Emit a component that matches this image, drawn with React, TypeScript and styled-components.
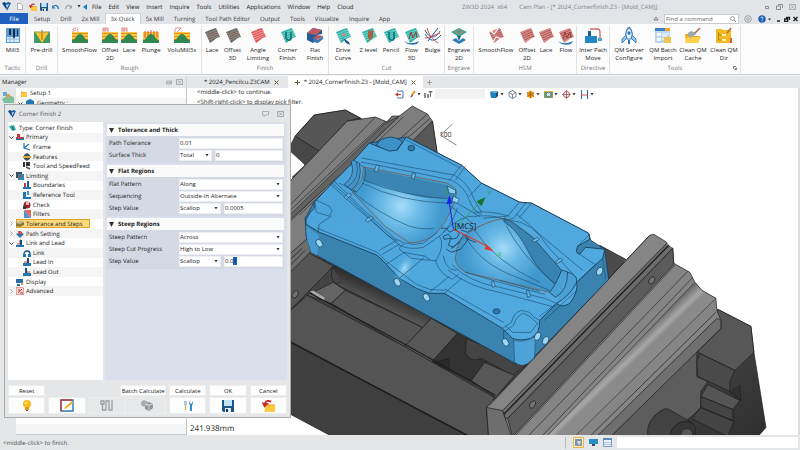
import React, { useEffect, useRef } from "react";
import styled, { createGlobalStyle, css } from "styled-components";

const GlobalStyle = createGlobalStyle`
  * { box-sizing: border-box; }
  body {
    margin: 0;
    background: #e4e6e8;
    color: #1c1c1c;
    font: 6px/8px "Open Sans", "Noto Sans", sans-serif;
    text-rendering: geometricPrecision;
  }
  button, input, select { font: inherit; color: inherit; margin: 0; border-radius: 0; }
  a { color: inherit; text-decoration: none; }
  svg { display: block; flex: none; }
`;

const Window = styled.div`
  min-height: 100vh;
  display: flex;
  flex-direction: column;
  overflow: hidden;
  white-space: nowrap;
`;

/* ---------- title bar ---------- */

const TitleBar = styled.header`
  display: flex;
  align-items: center;
  height: 13px;
  background: #e2e4e7;
`;

const QuickAccess = styled.div`
  display: flex;
  align-items: center;
  gap: 2px;
  width: 92px;
  padding-left: 2px;
`;

const IconButton = styled.button<{ $w?: number }>`
  display: flex;
  align-items: center;
  justify-content: center;
  padding: 0;
  border: 0;
  background: none;
  flex: none;
  width: ${(p) => p.$w ?? 9}px;
`;

const MenuBar = styled.nav`
  display: flex;
  gap: 7px;
  width: 370px;
`;

const WindowTitle = styled.div`
  flex: 1;
  display: flex;
  gap: 12px;
  color: #808387;
`;

const Controls = styled.div`
  display: flex;
  align-items: center;
  gap: 4px;
  padding-right: 3px;
`;

/* ---------- ribbon ---------- */

const TabBar = styled.nav`
  display: flex;
  align-items: stretch;
  height: 11px;
  background: #e2e4e7;
  color: #3a3a3a;
`;

const RibbonTab = styled.a<{ $kind?: "file" | "active" }>`
  display: flex;
  align-items: center;
  padding: 0 5px;
  ${(p) =>
    p.$kind === "file" &&
    css`
      width: 28px;
      justify-content: center;
      background: #1f5fbd;
      color: #fff;
      margin-right: 1px;
    `}
  ${(p) =>
    p.$kind === "active" &&
    css`
      background: #fcfcfc;
      border: 1px solid #cfd1d4;
      border-bottom: 0;
    `}
`;

const TabTools = styled.div`
  display: flex;
  align-items: center;
  gap: 5px;
  margin-left: auto;
  padding-right: 2px;
`;

const SearchBox = styled.label`
  display: flex;
  align-items: center;
  width: 75px;
  height: 10px;
  padding: 0 2px 0 1px;
  background: #fff;
  border: 1px solid #c9cbce;
`;

const BareInput = styled.input`
  flex: 1;
  min-width: 0;
  height: 100%;
  padding: 0;
  border: 0;
  outline: 0;
  background: none;
  &::placeholder { color: #666; opacity: 1; }
`;

const Ribbon = styled.div`
  display: flex;
  height: 51px;
  background: #fcfcfc;
  border-bottom: 1px solid #c9cbce;
`;

const Group = styled.section`
  display: flex;
  flex-direction: column;
  justify-content: space-between;
  position: relative;
  margin-top: 2px;
  padding-bottom: 2px;
  border-right: 1px solid #e2e3e5;
`;

const GroupTools = styled.div`
  display: flex;
  padding-top: 1px;
`;

const GroupName = styled.div`
  text-align: center;
  color: #76797c;
`;

const Launcher = styled.span`
  position: absolute;
  right: 3px;
  bottom: 4px;
`;

const Tool = styled.button<{ $w: number }>`
  display: flex;
  flex-direction: column;
  align-items: center;
  width: ${(p) => p.$w}px;
  padding: 0;
  border: 0;
  background: none;
  line-height: 8px;
  white-space: pre;
  text-align: center;
`;

const ToolIcon = styled.span`
  height: 18px;
  margin-bottom: 1px;
`;

/* ---------- document bar ---------- */

const DocBar = styled.div`
  display: grid;
  grid-template-columns: 187px 1fr;
  height: 13px;
  background: #e4e6e8;
  border-top: 1px solid #f4f5f6;
`;

const ManagerTitle = styled.div`
  display: flex;
  align-items: center;
  gap: 4px;
  padding: 0 3px 0 2px;
  border-right: 1px solid #d2d4d6;
`;

const Grow = styled.span`
  flex: 1;
`;

const DocTabs = styled.div`
  display: flex;
  align-items: stretch;
  gap: 2px;
  color: #1c1c1c;
`;

const DocTab = styled.div<{ $active?: boolean }>`
  display: flex;
  align-items: center;
  gap: 4px;
  padding: 0 7px 0 17px;
  ${(p) =>
    p.$active &&
    css`
      background: #fff;
      padding: 0 7px;
    `}
`;

/* ---------- work area ---------- */

const WorkArea = styled.main`
  flex: 1;
  display: grid;
  grid-template-columns: 187px 1fr;
  position: relative;
  min-height: 347px;
`;

const ManagerPane = styled.aside`
  display: flex;
  border-right: 1px solid #c4c6c9;
`;

const SideStrip = styled.div`
  width: 16px;
  padding: 3px 0 0 2px;
`;

const ManagerTree = styled.div`
  flex: 1;
  display: flex;
  flex-direction: column;
  background: #fff;
  border-bottom: 1px solid #c9cbce;
`;

const ManagerRow = styled.div<{ $shade?: boolean; $indent: number }>`
  display: flex;
  align-items: center;
  gap: 3px;
  height: 10px;
  padding-left: ${(p) => p.$indent}px;
  background: ${(p) => (p.$shade ? "#f5f5f5" : "#fff")};
`;

const Viewport = styled.section`
  position: relative;
  background: #fff;
  overflow: hidden;
  border-right: 2px solid #dcdee0;
`;

const Scene = styled.svg`
  position: absolute;
  inset: 0;
  width: 100%;
  height: 100%;
`;

const ViewHints = styled.div`
  position: absolute;
  top: -1px;
  left: 10px;
  color: #1c1c1c;
  line-height: 10px;
`;

const ViewTools = styled.div`
  position: absolute;
  top: 1px;
  left: 207px;
  display: flex;
  align-items: center;
  height: 10px;
`;

const FilterBox = styled.select`
  appearance: none;
  width: 50px;
  height: 10px;
  border: 0;
  background: #f2f2f2;
  margin: 0 3px 0 2px;
`;

const ViewScale = styled.div`
  position: absolute;
  left: 3px;
  bottom: 0;
  color: #1c1c1c;
  font-size: 8px;
  line-height: 12px;
`;

/* ---------- dialog ---------- */

const Dialog = styled.form`
  position: absolute;
  left: 4px;
  top: 16px;
  width: 287px;
  height: 314px;
  padding: 0 3px;
  display: flex;
  flex-direction: column;
  background: #e4e6e8;
  border: 1px solid #a9abae;
`;

const DialogTitle = styled.div`
  display: flex;
  align-items: center;
  gap: 3px;
  height: 17px;
  padding: 0 3px 0 0;
  color: #54575b;
`;

const DialogControls = styled.div`
  display: flex;
  gap: 8px;
  margin-left: auto;
`;

const DialogBody = styled.div`
  display: grid;
  grid-template-columns: 95px 1fr;
  gap: 2px;
  height: 258px;
`;

const PageTree = styled.ul`
  margin: 0;
  padding: 1px 0 84px;
  list-style: none;
  display: grid;
  grid-template-rows: repeat(18, 1fr);
  background: #fff;
`;

const PageNode = styled.li<{ $level: number; $shade: boolean }>`
  display: flex;
  align-items: center;
  padding-left: ${(p) => [1, 0, 15][p.$level]}px;
  background: ${(p) => (p.$shade ? "#f5f5f5" : "#fff")};
`;

const Expander = styled.span`
  width: 7px;
  margin: 0 0 0 1px;
`;

const NodeLabel = styled.span<{ $current?: boolean }>`
  display: flex;
  align-items: center;
  gap: 2px;
  min-height: 9px;
  ${(p) =>
    p.$current &&
    css`
      width: 74px;
      background: #fcd97a;
      box-shadow: 0 0 0 1px #e0a42a inset;
    `}
`;

const FormPane = styled.div`
  display: flex;
  flex-direction: column;
  gap: 2px;
  padding: 2px 3px 0 2px;
  background: #dadfeb;
`;

const Section = styled.fieldset`
  margin: 0;
  padding: 0 0 2px;
  border: 0;
  min-width: 0;
  background: #d5d9e4;
`;

const SectionHead = styled.h2`
  display: flex;
  align-items: center;
  gap: 4px;
  height: 12px;
  margin: 0 0 1px;
  padding-left: 2px;
  background: #fbfbfb;
  font-size: 6px;
  font-weight: 700;
`;

const Row = styled.div`
  display: grid;
  grid-template-columns: 70px 1fr;
  align-items: center;
  height: 12px;
  padding: 0 1px 0 2px;
`;

const Values = styled.div<{ $cols?: string }>`
  display: grid;
  grid-template-columns: ${(p) => p.$cols ?? "1fr"};
  gap: 3px;
`;

const fieldBox = css`
  width: 100%;
  height: 11px;
  padding: 0;
  border: 1px solid #eceef3;
  outline: 0;
  background: #fff;
`;

const Field = styled.input`
  ${fieldBox}
  &::selection { background: #1565c0; color: #0b2440; }
`;

const SelectWrap = styled.span`
  display: grid;
  align-items: center;
  > * { grid-area: 1 / 1; }
  > svg { justify-self: end; margin-right: 3px; pointer-events: none; }
`;

const SelectBox = styled.select`
  ${fieldBox}
  appearance: none;
`;

const Footer = styled.div`
  display: grid;
  grid-template-columns: repeat(7, minmax(0, 1fr));
  grid-template-rows: 11px 17px;
  gap: 1px 3px;
  margin-top: 5px;
`;

const PushButton = styled.button<{ $col?: number; $off?: boolean; $wide?: boolean }>`
  display: flex;
  align-items: center;
  justify-content: center;
  padding: 0;
  border: 1px solid #eceded;
  background: ${(p) => (p.$off ? "#e6e8ea" : "#fdfdfd")};
  grid-column: ${(p) => p.$col ?? "auto"};
  ${(p) =>
    p.$wide &&
    css`
      justify-self: end;
      width: 46px;
    `}
`;

/* ---------- status bar ---------- */

const StatusBar = styled.footer`
  display: flex;
  align-items: center;
  gap: 5px;
  height: 15px;
  padding: 0 2px 0 3px;
  background: #e4e6e8;
  color: #505356;
`;

const StatusDivider = styled.i`
  width: 1px;
  height: 12px;
  background: #b9c0b4;
  margin-right: 2px;
`;

const StatusInput = styled.input`
  width: 181px;
  height: 11px;
  border: 0;
  background: #fff;
`;

/* ---------- small icons ---------- */

const Caret = ({ c = "#333" }: { c?: string }) => (
  <svg width="4" height="3" viewBox="0 0 4 3"><path d="M.500 0h3L2 2.500z" fill={c} /></svg>
);

const Logo = ({ s = 9 }: { s?: number }) => (
  <svg width={s} height={s} viewBox="0 0 9 9">
    <path d="M0 1l3-1 2 3L4 7z" fill="#123f73" />
    <path d="M3 2l3-2 3 1-4 8z" fill="#1a5da4" />
    <path d="M4 3l3-1-2 4z" fill="#bfe0f7" />
  </svg>
);

const Folder = ({ s = 8, arrow = true }: { s?: number; arrow?: boolean }) => (
  <svg width={s} height={s} viewBox="0 0 12 12">
    <path d="M3 4h3l1 1h5v6.500h-9z" fill="#f0a21c" />
    <path d="M2 11.500L4 6h8v5.500z" fill="#ffc83d" />
    {arrow && <path d="M8.500 2.500C6 1 3.500 1.500 3 4" fill="none" stroke="#c62828" strokeWidth="1.600" />}
    {arrow && <path d="M0 3l6 1-4 4z" fill="#c62828" />}
  </svg>
);

const Floppy = ({ s = 8 }: { s?: number }) => (
  <svg width={s} height={s} viewBox="0 0 12 12">
    <path d="M0 0h12v12H1.500L0 10.500z" fill="#1c5688" />
    <path d="M2 0h8v6H2z" fill="#bfe4f6" />
    <path d="M3 8h6v4H3z" fill="#e8eef3" />
    <path d="M4 9h2v3H4z" fill="#16395a" />
  </svg>
);

const Curve = ({ flip, c }: { flip?: boolean; c: string }) => (
  <svg width="7" height="6" viewBox="0 0 7 6">
    <g transform={flip ? "matrix(-1 0 0 1 7 0)" : undefined}>
      <path d="M1 3C3 .5 6 1 6.500 5" fill="none" stroke={c} strokeWidth="1.300" />
      <path d="M0 1v3.500h3.500z" fill={c} />
    </g>
  </svg>
);

const Cross = ({ c = "#6b5a3a" }: { c?: string }) => (
  <svg width="5" height="5" viewBox="0 0 5 5"><path d="M.5.5l4 4M4.500.5l-4 4" stroke={c} strokeWidth="1" /></svg>
);

const BoxedCross = () => (
  <svg width="7" height="6" viewBox="0 0 7 6" fill="none" stroke="#909396" strokeWidth=".7">
    <path d="M.5.5h6v5h-6zM2 1.500l3 3M5 1.500l-3 3" />
  </svg>
);

/* ---------- ribbon icons ---------- */

const Terrain = ({ kind }: { kind: string }) => (
  <svg width="18" height="18" viewBox="0 0 18 18">
    {kind !== "plunge" && kind !== "drill" && (
      <g stroke="#d9736c" strokeWidth=".8" fill="none">
        <path d={kind === "volu" ? "M2 1h6L3 6M2 6V2" : "M2 1h5v5H2zM2 3h5M4 1v5"} strokeDasharray={kind === "smooth" ? "1 1" : undefined} />
      </g>
    )}
    <path d="M1 5h16v11H1z" fill={kind === "drill" ? "#3f9a60" : "#fbcb3c"} />
    {kind === "drill" ? (
      <>
        <path d="M2 5h14l-7 11z" fill="#f7c52f" />
        <path d="M9 3v10" stroke="#c05a2a" strokeWidth="1" />
        <path d="M1 5h16" stroke="#8f9c52" />
      </>
    ) : (
      <>
        {kind === "plunge" ? (
          <path d="M3 4v7M6 4v6M9 3v5M12 4v6M15 4v7" stroke="#df4a32" strokeWidth="1" />
        ) : (
          <path d="M1 6.500h16M1 9.500h16M1 12.500h16" stroke="#e98a2d" strokeWidth="1" />
        )}
        <path d="M1 16v-3c4 0 4-6 8-6s4 6 8 6v3z" fill="#31884f" />
      </>
    )}
  </svg>
);

const Surface = ({ tone, kind }: { tone: "gray" | "red" | "teal" | "pink"; kind?: string }) => {
  const [a, b] = { gray: ["#63716c", "#d4867b"], red: ["#e25d5f", "#f7b1ad"], teal: ["#35b5aa", "#8edfd4"], pink: ["#d98a86", "#9a4645"] }[tone];
  return (
    <svg width="18" height="18" viewBox="0 0 18 18">
      <path d="M2 5C6 4 8 2 13 1l4 9c-5 1-6 4-10 6z" fill={a} />
      <path d="M3 7c4-1 6-3 11-4M4 9c4-1 6-3 11-4M5 11c4-1 6-3 10-4M6 13c4-1 5-3 10-4" stroke={b} strokeWidth=".7" fill="none" />
      {kind === "groove" && <path d="M7 5v6c1 3 5 3 5 0V5" fill="none" stroke="#14717c" strokeWidth="1.600" />}
      {kind === "level" && <path d="M8 4l5-1v7l-3 3-2-2z" fill="#a9603f" />}
      {kind === "drive" && <path d="M9 11l6 4 1 3-4-2z" fill="#1a4f90" />}
      {kind === "drive" && <path d="M8 6l4 1-3 3z" fill="#e2836f" />}
      {kind === "flow" && <path d="M1 14c4 3 9 3 15 0l-2 3c-4 1-8 1-11-1z" fill="#2372ac" />}
      {kind === "flow" && <path d="M6 12l2-7 2 6 3-6 1 6" fill="none" stroke="#963c3c" />}
      {kind === "sparse" && <path d="M3 3l4 4 4-5M6 15l3-5 6 2" stroke="#fcfcfc" strokeWidth="1.200" fill="none" />}
    </svg>
  );
};

const Picture = ({ name }: { name: string }) => (
  <svg width="18" height="18" viewBox="0 0 18 18">
    {name === "mill" && (
      <>
        <path d="M2 1h14v15H2z" fill="#5b9bd0" />
        <path d="M3 10h12v5H3z" fill="#dcecf7" />
        <path d="M5 2h2v6H5zM9 2h2v9H9zM13 2h1v7h-1z" fill="#162c48" />
        <path d="M3 12h12M6 10v5M10 10v5" stroke="#6aa6d8" strokeWidth=".7" />
      </>
    )}
    {name === "flat" && (
      <>
        <path d="M1 6l6-5 9 2v4l-5 1v4l-4 4-6-3z" fill="#285a98" />
        <path d="M1 6l6-5 9 2-6 5zM7 11l5-3 5 1-5 4z" fill="#bf5a60" />
        <path d="M7 11l5 2 5-4v3l-5 4-5-1z" fill="#347ab9" />
      </>
    )}
    {name === "bulge" && (
      <g fill="none">
        <path d="M1 3c4 9 11 9 15 1M1 7c5 8 10 8 16 1M4 14L14 1" stroke="#2a5a96" />
        <path d="M3 1c2 7 5 11 11 15M1 11c5 0 9-3 15-5" stroke="#c8484c" />
      </g>
    )}
    {name === "engrave" && (
      <>
        <path d="M1 5l8-4 8 4-8 5z" fill="#37a49a" />
        <path d="M5 5l4-2 4 2-4 2z" fill="none" stroke="#d88065" />
        <path d="M7 9h4l-2 5z" fill="#1c6a90" />
        <path d="M2 13l4-2 3 3 4-3 3 2-7 4z" fill="#2d7bb2" />
      </>
    )}
    {name === "path" && (
      <>
        <path d="M1 9h12v7H1z" fill="#2387c4" />
        <path d="M4 9V4h3v5z" fill="#1b5f93" />
        <path d="M6 2h8c2 0 2 2 2 4v6" fill="none" stroke="#cf6763" strokeWidth="1.300" />
        <path d="M14 11h4v3h-4z" fill="#4aa6d8" />
      </>
    )}
    {name === "rocket" && (
      <>
        <path d="M9 0c4 4 4 8 2 12H7C5 8 5 4 9 0z" fill="#eaf4fb" stroke="#2f78b7" strokeWidth="1.200" />
        <path d="M6 8l-4 4v4l4-4M12 8l4 4v4l-4-4" fill="#90c4ea" stroke="#2f78b7" strokeWidth=".9" />
        <circle cx="9" cy="6" r="1.700" fill="#2f78b7" />
        <path d="M8 13h2v4H8z" fill="#2f78b7" />
      </>
    )}
    {name === "batch" && (
      <>
        <path d="M1 1h15v15H1z" fill="#b9d7ef" />
        <path d="M1 1h15v3H1z" fill="#3c7fc0" />
        <path d="M3 6h4v3H3zM3 11h4v3H3z" fill="#fff" />
        <path d="M8 7h7M8 9h5M8 12h7" stroke="#fff" strokeWidth="1" />
        <path d="M11 1h5v3h-5z" fill="#f3a12d" />
        <path d="M10 10h7v6h-7z" fill="#f0c24e" />
      </>
    )}
    {name === "cleanCache" && (
      <>
        <path d="M1 7h6l1 2h8l-2 7H2z" fill="#eeaa1d" />
        <path d="M3 10h14l-3 6H1z" fill="#ffd04a" />
        <path d="M16 1l-6 6" stroke="#a36a4a" strokeWidth="1.600" />
        <path d="M4 6c3-3 6-2 8 1l-5 4c-2-1-3-2-3-5z" fill="#9fa7b0" />
      </>
    )}
    {name === "cleanDir" && (
      <>
        <path d="M1 2h6l1 1h8v13H1z" fill="#f6ba22" />
        <path d="M3.500 5v8h3M3.500 8h3" fill="none" stroke="#a37a1c" strokeWidth=".8" />
        <path d="M7 7h4v2H7zM7 12h4v2H7z" fill="#fff0b8" />
        <path d="M16 1l-4 5" stroke="#b06a38" strokeWidth="1.500" />
        <path d="M15 11h2v5h-2z" fill="#da5a36" />
      </>
    )}
  </svg>
);

type ToolDef = [label: string, width: number, icon: React.ReactNode];
const groups: { name: string; tools: ToolDef[]; launcher?: boolean }[] = [
  { name: "Tactic", tools: [["Mill3", 25, <Picture name="mill" />]] },
  { name: "Drill", tools: [["Pre-drill", 31, <Terrain kind="drill" />]] },
  {
    name: "Rough",
    tools: [
      ["SmoothFlow", 43, <Terrain kind="smooth" />],
      ["Offset\n2D", 18, <Terrain kind="offset" />],
      ["Lace", 20, <Terrain kind="lace" />],
      ["Plunge", 24, <Terrain kind="plunge" />],
      ["VoluMill3x", 38, <Terrain kind="volu" />],
    ],
  },
  {
    name: "Finish",
    tools: [
      ["Lace", 20, <Surface tone="gray" />],
      ["Offset\n3D", 21, <Surface tone="gray" />],
      ["Angle\nLimiting", 30, <Surface tone="red" />],
      ["Corner\nFinish", 29, <Surface tone="teal" kind="groove" />],
      ["Flat\nFinish", 26, <Picture name="flat" />],
    ],
  },
  {
    name: "Cut",
    tools: [
      ["Drive\nCurve", 28, <Surface tone="teal" kind="drive" />],
      ["Z level", 23, <Surface tone="teal" kind="level" />],
      ["Pencil", 22, <Surface tone="teal" kind="groove" />],
      ["Flow\n3D", 19, <Surface tone="teal" kind="flow" />],
      ["Bulge", 23, <Picture name="bulge" />],
    ],
  },
  { name: "Engrave", tools: [["Engrave\n2D", 28, <Picture name="engrave" />]] },
  {
    name: "HSM",
    tools: [
      ["SmoothFlow", 44, <Surface tone="pink" kind="sparse" />],
      ["Offset\n2D", 18, <Surface tone="pink" />],
      ["Lace", 20, <Surface tone="pink" />],
      ["Flow", 20, <Surface tone="pink" kind="flow" />],
    ],
  },
  { name: "Directive", tools: [["Inter Path\nMove", 32, <Picture name="path" />]] },
  {
    name: "Tools",
    launcher: true,
    tools: [
      ["QM Server\nConfigure", 38, <Picture name="rocket" />],
      ["QM Batch\nImport", 30, <Picture name="batch" />],
      ["Clean QM\nCache", 30, <Picture name="cleanCache" />],
      ["Clean QM\nDir", 32, <Picture name="cleanDir" />],
    ],
  },
];

/* ---------- option tree ---------- */

const NodeIcon = ({ name }: { name: string }) => (
  <svg width="8" height="8" viewBox="0 0 8 8">
    {name === "type" && <><path d="M0 2l5-1 2 5-4 1z" fill="#35a79c" /><path d="M3 3l2 3" stroke="#175f72" /></>}
    {name === "primary" && <><path d="M0 4h8v3H0z" fill="#1f6fae" /><path d="M1 1h3v3h3v2H1z" fill="#c83b36" /></>}
    {name === "frame" && <path d="M1 0v5l6 2M1 5l5-4" fill="none" stroke="#246fae" strokeWidth="1.200" />}
    {name === "features" && <><path d="M1 2l3-2 3 2v4L4 8 1 6z" fill="#37525f" /><path d="M0 3h8v2H0z" fill="#e3a92e" /></>}
    {name === "tool" && <><path d="M0 0h2v5H0zM3 0h4v4H3z" fill="#333" /><path d="M3 5l4 2" stroke="#555" strokeWidth="1.500" /></>}
    {name === "limiting" && <><path d="M0 0h6v6H0z" fill="#37525f" /><path d="M2 2h6v6H2z" fill="#2a8ab0" /><path d="M3 3h2v3H3z" fill="#b44" /></>}
    {name === "bounds" && <><path d="M0 6h8v2H0z" fill="#1f77b5" /><path d="M1 2h2v4H1z" fill="#c33" /><path d="M4 0h2v6H4z" fill="#1a5d93" /></>}
    {name === "ref" && <><path d="M0 1h3v5h5v2H0z" fill="#1f77b5" /><path d="M4 0h2v4H4z" fill="#3a97cf" /></>}
    {name === "check" && <><circle cx="4" cy="4" r="3.500" fill="#9c2430" /><path d="M3 1h3v3H3z" fill="#f0b7b7" /><path d="M0 5h3v3H0z" fill="#333" /></>}
    {name === "filters" && <><path d="M1 0h7v8z" fill="#e06a60" /><path d="M1 0v8h7z" fill="#5592ca" /></>}
    {name === "steps" && <><path d="M0 3l4-2 4 1v3L4 7 0 6z" fill="#8c7a3c" /><path d="M0 3l4-2 4 1-4 2z" fill="#c9bf9b" /></>}
    {name === "path" && <><path d="M0 4l4-2 4 2-4 4z" fill="#1f77b5" /><path d="M2 1h3l2 3-4 1z" fill="#c8504b" /></>}
    {name === "linklead" && <><path d="M0 6h8v2H0z" fill="#1f77b5" /><path d="M1 5h3V1h1v3" fill="none" stroke="#d33" /><path d="M4 1h2v5H4z" fill="#174f80" /></>}
    {name === "leadin" && <><path d="M0 5h8v3H0z" fill="#1f77b5" /><path d="M4 0h2v5H4z" fill="#174f80" /><path d="M1 4h3" stroke="#d33" /></>}
    {name === "leadout" && <><path d="M0 5h8v3H0z" fill="#1f77b5" /><path d="M2 0h2v5H2z" fill="#174f80" /><path d="M4 4h3" stroke="#d33" /></>}
    {name === "arch" && <><path d="M0 5h3v3H0zM5 5h3v3H5z" fill="#1f77b5" /><path d="M1 5c0-4 6-4 6 0" stroke="#174f80" strokeWidth="1.300" fill="none" /></>}
    {name === "display" && <><path d="M0 1h7v4H0z" fill="#2f6da8" /><path d="M1 6h3v2H1z" fill="#1f77b5" /><path d="M5 5h2v2H5z" fill="#e2a33a" /></>}
    {name === "advanced" && <><path d="M0 0h6l2 2v6H0z" fill="#f4d3d0" stroke="#c4544e" strokeWidth=".7" /><path d="M2 6l4-4M2 3h2M4 6h3" stroke="#b8423c" /></>}
  </svg>
);

type NodeDef = [label: string, level: 0 | 1 | 2, icon: string, open?: boolean];
const nodes: NodeDef[] = [
  ["Type: Corner Finish", 0, "type"],
  ["Primary", 1, "primary", true],
  ["Frame", 2, "frame"],
  ["Features", 2, "features"],
  ["Tool and SpeedFeed", 2, "tool"],
  ["Limiting", 1, "limiting", true],
  ["Boundaries", 2, "bounds"],
  ["Reference Tool", 2, "ref"],
  ["Check", 2, "check"],
  ["Filters", 2, "filters"],
  ["Tolerance and Steps", 1, "steps", false],
  ["Path Setting", 1, "path", false],
  ["Link and Lead", 1, "linklead", true],
  ["Link", 2, "arch"],
  ["Lead In", 2, "leadin"],
  ["Lead Out", 2, "leadout"],
  ["Display", 1, "display"],
  ["Advanced", 1, "advanced", false],
];

const Chevron = ({ open }: { open?: boolean }) =>
  open === undefined ? null : (
    <svg width="5" height="5" viewBox="0 0 5 5">
      <path d={open ? "M.5 1.500l2 2 2-2" : "M1.500.5l2 2-2 2"} fill="none" stroke={open ? "#333" : "#999"} strokeWidth=".9" />
    </svg>
  );

const Choice = ({ id, value }: { id: string; value: string }) => (
  <SelectWrap>
    <SelectBox id={id} aria-label={id} defaultValue={value}>
      <option>{value}</option>
    </SelectBox>
    <Caret />
  </SelectWrap>
);

const Head = ({ children }: { children: string }) => (
  <SectionHead>
    <svg width="5" height="5" viewBox="0 0 5 5"><path d="M0 0h5L2.500 5z" fill="#333" /></svg>
    {children}
  </SectionHead>
);

/* ---------- model view ---------- */

const ln = { fill: "none", stroke: "#1b4a6c", strokeWidth: 0.6 };
const Model = () => (
  <Scene viewBox="188 88 610 347" preserveAspectRatio="xMinYMin slice" role="img" aria-label="Mold core clamped in a vise">
    <defs>
      <linearGradient id="top" x1="0" y1="0" x2="1" y2="1">
        <stop offset="0" stopColor="#4ba3da" /><stop offset="1" stopColor="#52abe0" />
      </linearGradient>
      <radialGradient id="glow1" gradientUnits="userSpaceOnUse" cx="402" cy="206" r="40" gradientTransform="rotate(30 402 206)">
        <stop offset="0" stopColor="#a5dcf8" /><stop offset=".45" stopColor="#6dbce8" /><stop offset="1" stopColor="#429bd0" />
      </radialGradient>
      <radialGradient id="glow2" gradientUnits="userSpaceOnUse" cx="504" cy="248" r="42">
        <stop offset="0" stopColor="#a5dcf8" /><stop offset=".4" stopColor="#68b8e6" /><stop offset="1" stopColor="#3f97cc" />
      </radialGradient>
      <radialGradient id="glow3">
        <stop offset="0" stopColor="#a5dcf8" /><stop offset="1" stopColor="#4fa8dd" stopOpacity="0" />
      </radialGradient>
      <linearGradient id="cove" gradientUnits="userSpaceOnUse" x1="600" y1="350" x2="622" y2="373">
        <stop offset="0" stopColor="#595959" /><stop offset=".55" stopColor="#6b6b6b" /><stop offset=".85" stopColor="#a8a8a8" /><stop offset="1" stopColor="#8a8a8a" />
      </linearGradient>
      <linearGradient id="rail" gradientUnits="userSpaceOnUse" x1="385" y1="290" x2="378" y2="306">
        <stop offset="0" stopColor="#303030" /><stop offset="1" stopColor="#585858" />
      </linearGradient>
      <linearGradient id="side" x1="0" y1="0" x2="1" y2="1">
        <stop offset="0" stopColor="#565656" /><stop offset="1" stopColor="#2e2e2e" />
      </linearGradient>
    </defs>

    <g stroke="#1d1d1d" strokeWidth=".7" strokeLinejoin="round">
      {/* fixed jaw */}
      <path d="M291 146L296 136L315 115L346 110L361 118L380 130L306 180L293 177L306 165L303 162L291 151Z" fill="#484848" />
      <path d="M296 136L315 115L346 110L361 118L348 121L320 151Z" fill="#565656" />
      <path d="M288 184L348 121L376 117L388 122L393 116L400 116L413 106L428 114L433 121L438 156L340 250L288 290Z" fill="#7e7e7e" />
      <path d="M433 121L439 160L404 150Z" fill="#575757" />
      <path d="M288 208L376 117M288 213L386 121M288 221L393 116M288 224L399 117M300 215L404 117M330 203L428 114M333 203L430 119" fill="none" strokeWidth=".6" />
      <path d="M386 123L400 116L372 143L345 171L288 222V217Z" fill="#626262" strokeWidth=".5" />

      {/* base */}
      <path d="M288 272L308 252L500 340L530 365L494 400L400 360L288 316Z" fill="#434343" />
      <path d="M309 252L334 266L290 311L288 272Z" fill="#555" />
      <path d="M288 256L312 235L313 250L288 275Z" fill="#6d6d6d" />
      <path d="M306 250L288 268M303 248L288 262" fill="none" />
      <path d="M333 267L350 262L440 310L423 327L337 284Z" fill="url(#rail)" />
      <path d="M333 267L332 276Q336 288 342 281" fill="#454545" />
      <path d="M334 282L346 290L332 303L308 295Z" fill="#646464" />
      <path d="M346 290L423 327L406 347L332 303Z" fill="#555" />
      <path d="M310 291L314 290L326 297L325 301Z" fill="#aaa" strokeWidth=".4" />
      <path d="M432 318L458 333L432 362L405 346Z" fill="#575757" />
      <path d="M458 333L432 362L472 380L487 362L470 340Z" fill="#333" />
      <path d="M467 338L466 352Q470 363 482 358L513 375L527 364Z" fill="#444" />
      <path d="M485 362L515 375L496 397L472 380Z" fill="#575757" />
      <path d="M436 362L449 358L450 369Z" fill="#2a2a2a" />
      <path d="M288 313L308 295L407 347L495 397L487 407L490 436H468L288 339Z" fill="#545454" />
      <path d="M311 293L406 344L496 395" fill="none" strokeWidth="1.200" />
      <path d="M288 340L470 436H333L288 412Z" fill="#3f3f3f" />
      <path d="M288 340L470 436" strokeWidth="1.600" />
      <ellipse cx="296" cy="294" rx="2.500" ry="4" transform="rotate(30 296 294)" fill="#717171" />
      <path d="M600 245L626 259L610 280L592 300Z" fill="#4b4b4b" />

      {/* moving jaw support */}
      <path d="M718 309L751 326L754 352L766 427L758 436H610L690 340Z" fill="url(#side)" />
      <path d="M718 309L751 326L754 352L735 370L700 353L690 340Z" fill="#575757" />
      <path d="M721 328L697 352V376L708 381L701 391V407L694 414L650 450H590L600 420Z" fill="#5d5d5d" />
      <path d="M700 353L735 370L730 381V391L698 376L697 361Z" fill="#4a4a4a" />
      <path d="M708 384L740 400L733 409L701 396Z" fill="#555" />
      <path d="M701 396L733 409L733 420L701 407ZM701 407L734 421L728 436L692 418Z" fill="#444" />
      <path d="M740 384L741 400L729 391" fill="#2f2f2f" />
      <path d="M648 436Q646 420 660 411Q666 406 671 410L692 422V436Z" fill="#424242" />
      <ellipse cx="683" cy="433" rx="14" ry="11" fill="#353535" transform="rotate(-40 683 433)" />
      <circle cx="687" cy="434" r="6" fill="#555" />

      {/* moving jaw */}
      <path d="M650 235L654 234L667 242V246L673 248L674 263L690 272L695 282L702 290L716 298L717 310L721 320V328L697 350L611 436H489L487 407Z" fill="#858585" />
      <path d="M673 248L674 264L513 436L510 425L508 418Z" fill="#5c5c5c" />
      <path d="M667 243L503 410L505 417L508 418L673 248" fill="#6c6c6c" />
      <path d="M669 245L504 414" fill="none" strokeWidth="1.300" />
      <path d="M487 407L503 410L512 436H489Z" fill="#6e6e6e" />
      <path d="M650 235L490 405M675 265L515 436M688 271L528 436M693 277L542 436" fill="none" strokeWidth=".6" />
      <path d="M695 282L702 290L716 298L575 436H547Z" fill="url(#cove)" strokeWidth=".5" />
      <path d="M717 318L597 436L611 436L721 328V320Z" fill="#6f6f6f" />
      <path d="M716 312L590 436" fill="none" />
      <ellipse cx="652" cy="280" rx="2.500" ry="4" transform="rotate(30 652 280)" fill="#747474" />
      <ellipse cx="533" cy="404" rx="2.500" ry="4" transform="rotate(30 533 404)" fill="#747474" />
    </g>

    {/* mold core */}
    <g stroke="#143650" strokeWidth=".8" strokeLinejoin="round">
      <path d="M306 218L315 202L353 164L370 143L407 137L462 165L482 183L520 202L532 203L589 233L591 240L605 249L609 279L528 363Q522 366 514 362L312 252L307 236Z" fill="#3a83b0" />
      <path d="M377 145Q380 138 391 137Q400 138 403 142L397 151L389 152Z" fill="#3c91c7" />
      <path d="M315 202L333 183L352 164L354 161L370 143L390 151L398 150L407 137L462 165L482 183L520 202L532 203L589 233L590 239L578 246Q575 253 580 254L586 247L605 249L603 258L577 282Q579 292 570 303Q562 308 557 303L540 320Q541 333 531 338Q520 341 513 338L503 328L445 293L430 293L417 288L400 278L387 264L378 255L320 232L307 224Q305 218 315 208Z" fill="url(#top)" />
    </g>
    <path d="M307 226L320 235L318 255L312 252L308 240Z" fill="#469bd0" />
    <path d="M514 340Q524 344 536 336L535 356Q524 370 515 361Z" fill="#4da3d7" />
    <ellipse cx="405" cy="268" rx="17" ry="9" fill="url(#glow3)" transform="rotate(-60 405 268)" />

    <g strokeLinejoin="round" strokeLinecap="round">
      {/* left cavity */}
      <path d="M365 167L412 176L448 183Q458 188 457 193L455 202Q446 226 433 236Q420 244 409 242L387 227Q370 210 353 192L362 180Z" fill="url(#glow1)" stroke="#7c5a4c" strokeWidth=".8" />
      <path d="M366 168L412 177L448 185Q456 190 455 198Q430 200 410 194L363 180Z" fill="#3b85b4" />
      <path d="M365 180Q400 196 455 199M363 183Q400 202 450 203M354 192Q380 214 410 226Q425 230 434 228" {...ln} />
      <path d="M352 162L354 160L360 163Q364 180 352 190L345 184Q357 176 352 162Z" fill="#4597cb" stroke="#173e5b" strokeWidth=".7" />
      <path d="M360 164L366 168Q368 182 357 192L352 190M357 162Q362 178 348 187M340 183L350 188L357 192" {...ln} />
      <path d="M331 184Q354 205 384 231L400 245Q410 250 424 247L440 236Q452 226 458 208M335 181Q360 206 388 232Q404 248 424 243L438 232" {...ln} />
      <path d="M362 162L414 172L452 180Q465 186 470 200Q474 212 482 214M363 158L416 168L455 175Q470 184 474 198L482 212" {...ln} />
      <path d="M377 165l-2 6 3 1 2-6zM413 173l-1 5 3 1 1-5zM371 216l-5 4 2 2 6-4zM349 193l-4 4 2 2 5-4z" fill="#67b7e6" stroke="#173e5b" strokeWidth=".6" />

      {/* right cavity */}
      <path d="M457 252Q458 240 470 232Q486 221 505 218L513 222L533 237L562 270L560 284L550 292L500 280L466 272Q452 264 457 252Z" fill="url(#glow2)" stroke="#7c5a4c" strokeWidth=".8" />
      <path d="M505 218L513 222L533 237L562 270L557 285Q536 268 528 250Q518 230 505 222Z" fill="#3883b2" stroke="#173e5b" strokeWidth=".6" />
      <path d="M507 226Q522 256 556 284M466 236Q480 264 520 278L550 290M475 230Q496 262 540 282" {...ln} />
      <path d="M511 220Q534 222 548 246L577 278M517 214Q530 224 540 234L583 270M520 202L508 216L484 218M526 203L514 218L504 221M532 203L520 217" {...ln} />
      <path d="M453 265Q470 282 500 287L545 298L557 303M449 270Q470 287 500 292L552 306M500 280L540 291M466 272L500 282L545 294" {...ln} />
      <path d="M562 270Q556 285 550 292L556 297Q568 290 568 272ZM568 272Q578 274 577 282Q570 296 557 303" fill="#4a9fd3" stroke="#173e5b" strokeWidth=".8" />
      <path d="M533 240l5 -3 2 2-5 3zM556 261l5-3 2 2-5 3zM529 290l2 6-3 1-1-6zM494 281l2 5-3 1-1-5z" fill="#67b7e6" stroke="#173e5b" strokeWidth=".6" />

      {/* centre runners */}
      <path d="M440 236Q446 244 437 260Q432 262 426 256L404 252Q396 248 404 244M444 232Q462 214 476 216M436 260Q440 274 453 279L459 274M444 256Q446 270 457 270M404 252L412 258L430 260" {...ln} />
      <path d="M476 216Q496 214 506 220M474 212Q490 210 510 216M450 205L474 224M456 202L480 216M383 254L400 244M380 250L396 241M387 264L405 252M462 165L450 180M482 183L470 196M466 166L456 180M430 292L450 276M445 293L462 278M400 278L424 258" {...ln} />
      <path d="M442 228h5l3 4 6-3 4 4-3 5-6 1-2 6 5 2 6-6 4-6 5 2-3 6-5 6-9 3-5-3M444 236l5-2 3 4-7 1zM462 230l6 2 5-3M466 238l10 4M452 248l8-6" fill="none" stroke="#173e5b" strokeWidth=".8" />
      <path d="M448 186l8 4v4l-6-1zM454 196l6 3-2 4-5-2z" fill="#8bcdf1" stroke="#173e5b" strokeWidth=".6" />

      {/* corner pockets and front edges */}
      <path d="M316 202L317 212L330 216L333 211L330 206L317 200M319 232L320 224L332 216M333 183L350 198L388 235L398 241M318 228L378 252L388 262L417 284L430 289L445 290" {...ln} />
      <path d="M503 328L512 322Q514 312 522 310L530 312Q534 318 540 320M505 331L514 325Q517 315 524 313L530 316L538 323M504 338V330M514 338L515 361M536 334L535 358M506 325L513 332L531 332L538 323" {...ln} />
      <path d="M578 246L589 235M580 254L595 264M557 303L540 316M603 258L606 279M545 320L577 290M597 263L577 282" {...ln} />
      <path d="M446 289L504 322M407 140L461 168M378 255L387 264" {...ln} />
    </g>
    <g stroke="#173e5b" strokeWidth=".7" fill="#2f78a8">
      <ellipse cx="412" cy="148" rx="3.500" ry="2.800" />
      <ellipse cx="497" cy="311" rx="3.500" ry="2.600" />
    </g>
    <g stroke="#173e5b" strokeWidth=".7" fill="#9bd6f5">
      {[[320, 243], [398, 282], [427, 297], [506, 342], [538, 336], [546, 340], [600, 271]].map(([x, y]) => (
        <ellipse key={x} cx={x} cy={y} rx="2.800" ry="4.200" transform={`rotate(${x > 530 ? 25 : -35} ${x} ${y})`} />
      ))}
    </g>

    {/* coordinate frame */}
    <path d="M454 229L450 204" stroke="#1b22e0" strokeWidth="1" />
    <path d="M447 204L450 195L453 203Z" fill="#1b22e0" />
    <path d="M454 229L478 205" stroke="#2a9b45" strokeWidth=".8" />
    <path d="M477 201L486 197L482 206Z" fill="#17722c" />
    <path d="M454 229L488 246" stroke="#e03a2a" strokeWidth="1" />
    <path d="M487 244L494 251L485 249Z" fill="#e03a2a" />
    <g fontFamily="Open Sans, Noto Sans, sans-serif">
      <text x="498" y="257" fontSize="7" fill="#22c83c">X</text>
      <text x="488" y="195" fontSize="7" fill="#2f9e48">Y</text>
      <text x="446" y="194" fontSize="7" fill="#2f9e48">Z</text>
      <text x="455" y="229" fontSize="8" fill="#111">[MCS]</text>
      <text x="440" y="137" fontSize="7" fill="#4a1420">100</text>
    </g>
    <path d="M453 124L441 135L457 145" fill="none" stroke="#555" strokeWidth=".7" />
  </Scene>
);

const ViewIcon = ({ name }: { name: string }) => (
  <svg width="9" height="9" viewBox="0 0 9 9">
    {name === "exit" && <><path d="M2 1h6v7H2" fill="none" stroke="#3d7db4" /><path d="M6 4.500H1M3 3L1 4.500 3 6" fill="none" stroke="#c9342d" strokeWidth="1.100" /></>}
    {name === "brush" && <><path d="M7 1L4 5" stroke="#e3952b" strokeWidth="2" /><path d="M4 4l1 2-3 2z" fill="#8d4534" /></>}
    {name === "filter" && <><path d="M0 3h2v5H0zM3 4h2v4H3z" fill="#8b8e91" /><path d="M4 1h5L7 3v4H6V3z" fill="#6c6f72" /></>}
    {name === "solid" && <><path d="M0 2l3-1h5L6 3v5H1z" fill="#1f7fc0" /><path d="M6 3l2-2v5L6 8z" fill="#125583" /><path d="M0 2l3-1h5L6 3z" fill="#6bb8e6" /></>}
    {name === "wire" && <path d="M1 2.500l3.500-2 3.500 2v4L4.500 8.500 1 6.500zM1 2.500l3.500 2 3.500-2M4.500 4.500v4" fill="#fff" stroke="#5b6770" strokeWidth=".8" />}
    {name === "star" && <><path d="M1 2.500L4.500.5 8 2.500v4L4.500 8.500 1 6.500z" fill="#f1a124" /><path d="M1 2.500l7 4M8 2.500l-7 4M4.500 1v7" stroke="#a65b13" strokeWidth=".8" /></>}
    {name === "zoom" && <><path d="M0 1h9v7H0z" fill="#8aa04f" /><circle cx="4.500" cy="4.500" r="2.500" fill="#d7ebf7" stroke="#31688f" /><path d="M0 1h9v1H0z" fill="#e4ad38" /></>}
    {name === "target" && <><circle cx="4.500" cy="4.500" r="3" fill="none" stroke="#b8494a" /><path d="M4.500 0v9M0 4.500h9" stroke="#8d5257" strokeWidth=".8" /></>}
    {name === "ruler" && <><path d="M1.500 0v9M7.500 0v9" stroke="#2e6ea8" strokeWidth="1.100" /><path d="M1 5h7" stroke="#c9534d" /></>}
  </svg>
);

const FooterIcon = ({ name }: { name: string }) => (
  <svg width="14" height="13" viewBox="0 0 14 13">
    {name === "bulb" && <><circle cx="7" cy="5" r="4" fill="#fdb915" /><path d="M5 8h4v3H5z" fill="#e59712" /><path d="M6 11h2v1H6z" fill="#555" /><circle cx="6" cy="4" r="1.500" fill="#ffe07a" /></>}
    {name === "edit" && <><path d="M1 1h12v11H1z" fill="#fff" stroke="#2c78b7" strokeWidth="1.400" /><path d="M1 12V1h11" fill="none" stroke="#c93a34" strokeWidth="1.400" /><path d="M12 2L5 8l-1 2 2-.5L13 4z" fill="#f0ac28" /></>}
    {name === "pulse" && <path d="M1 2h3v3H1zM2.500 5v6H6V2h3v9h3V1" fill="none" stroke="#9b9da0" strokeWidth="1.300" />}
    {name === "block" && <><path d="M5 5l4-2 4 2v4l-4 3-4-2z" fill="#909295" /><path d="M1 3l3-2 4 2v4L4 8 1 6z" fill="#a9abad" /><path d="M5 5l4 1 4-1M9 6v5" stroke="#d7d8d9" fill="none" /></>}
    {name === "tools" && <><path d="M3 2h3v4L5 7H4L3 6z" fill="#b4c6d2" /><path d="M4 7h1v4H4z" fill="#d9a33c" /><path d="M8 4l1-2v2l1 1 1-1V2l1 2-1 3v5H9V7z" fill="#2f8fc7" /></>}
  </svg>
);

export default function App() {
  const stepRef = useRef<HTMLInputElement>(null);
  useEffect(() => {
    stepRef.current?.focus();
    stepRef.current?.setSelectionRange(3, 4);
  }, []);

  return (
    <Window>
      <GlobalStyle />
      <TitleBar>
        <QuickAccess>
          <Logo />
          <IconButton aria-label="New" $w={13}>
            <svg width="6" height="7"><path d="M.5.5h3l2 2v4h-5z" fill="#fff" stroke="#999" strokeWidth=".7" /></svg>
          </IconButton>
          <IconButton aria-label="Open"><Folder /></IconButton>
          <IconButton aria-label="Save"><Floppy /></IconButton>
          <IconButton aria-label="Undo" $w={11}><Curve c="#2c7fc0" /></IconButton>
          <IconButton aria-label="Redo" $w={11}><Curve flip c="#a2a6aa" /></IconButton>
          <IconButton aria-label="Customize" $w={5}><Caret /></IconButton>
          <IconButton aria-label="Collapse" $w={4}>
            <svg width="4" height="6"><path d="M4 0v6L0 3z" fill="#1e7fd0" /></svg>
          </IconButton>
        </QuickAccess>
        <MenuBar>
          {["File", "Edit", "View", "Insert", "Inquire", "Tools", "Utilities", "Applications", "Window", "Help", "Cloud"].map((m) => (
            <a href="#menu" key={m}>{m}</a>
          ))}
        </MenuBar>
        <WindowTitle>
          <span>ZW3D 2024&nbsp; x64</span>
          <span>Cam Plan - [* 2024_Cornerfinish.Z3 - [Mold_CAM]]</span>
        </WindowTitle>
        <Controls>
          <IconButton aria-label="Minimize"><svg width="4" height="4"><path d="M.5 1.500h3v2h-3z" fill="none" stroke="#777" strokeWidth=".8" /></svg></IconButton>
          <IconButton aria-label="Restore"><svg width="7" height="6"><path d="M2 .5h4.500v3.500M.5 2h4v3.500h-4z" fill="none" stroke="#777" strokeWidth=".8" /></svg></IconButton>
          <IconButton aria-label="Close"><BoxedCross /></IconButton>
        </Controls>
      </TitleBar>

      <TabBar>
        <RibbonTab href="#file" $kind="file">File</RibbonTab>
        {["Setup", "Drill", "2x Mill", "3x Quick", "5x Mill", "Turning", "Tool Path Editor", "Output", "Tools", "Visualize", "Inquire", "App"].map((t) => (
          <RibbonTab href="#tab" key={t} $kind={t === "3x Quick" ? "active" : undefined}>{t}</RibbonTab>
        ))}
        <TabTools>
          <svg width="6" height="5" viewBox="0 0 6 5"><path d="M1 4h4L3 1z" fill="none" stroke="#666" strokeWidth=".8" /></svg>
          <SearchBox>
            <BareInput aria-label="Find a command" placeholder="Find a command" />
            <svg width="6" height="6" viewBox="0 0 6 6"><circle cx="2.500" cy="2.500" r="2" fill="none" stroke="#888" strokeWidth=".8" /><path d="M4 4l2 2" stroke="#888" /></svg>
          </SearchBox>
          <svg width="8" height="8" viewBox="0 0 8 8"><circle cx="4" cy="4" r="3.300" fill="none" stroke="#9a9da0" strokeWidth=".9" /><circle cx="4" cy="4" r="1.300" fill="none" stroke="#9a9da0" strokeWidth=".8" /></svg>
          <svg width="14" height="8" viewBox="0 0 14 8"><circle cx="5" cy="4" r="3.700" fill="#1f5fb5" /><path d="M3.800 3c.4-1.600 2.600-1.100 2.200.2-.2.600-1 .6-1 1.500M5 5.600v.9" fill="none" stroke="#fff" strokeWidth=".8" /><path d="M11 3.500h3l-1.500 2z" fill="#333" /></svg>
          <svg width="22" height="6" viewBox="0 0 22 6"><path d="M1 5h3M10 1.500h3.500V4M8.700 3h3v2.300h-3z" fill="none" stroke="#222" strokeWidth="1.300" /><path d="M17.500 1l4 4M21.500 1l-4 4" stroke="#222" strokeWidth="1.400" /></svg>
        </TabTools>
      </TabBar>

      <Ribbon>
        {groups.map((g) => (
          <Group key={g.name}>
            <GroupTools>
              {g.tools.map(([label, w, icon]) => (
                <Tool key={label} $w={w}>
                  <ToolIcon>{icon}</ToolIcon>
                  {label}
                </Tool>
              ))}
            </GroupTools>
            <GroupName>{g.name}</GroupName>
            {g.launcher && (
              <Launcher>
                <svg width="4" height="4"><path d="M.5 3V.5H3M1.500 1.500l2 2M3.500 1.500v2h-2" fill="none" stroke="#666" strokeWidth=".8" /></svg>
              </Launcher>
            )}
          </Group>
        ))}
      </Ribbon>

      <DocBar>
        <ManagerTitle>
          Manager
          <Grow />
          <svg width="6" height="5"><path d="M.5 1h5v3h-5zM.5 2.500h5" fill="none" stroke="#999" strokeWidth=".7" /></svg>
          <BoxedCross />
        </ManagerTitle>
        <DocTabs>
          <DocTab>* 2024_Pencilcu.Z3CAM <Cross /></DocTab>
          <DocTab $active>
            <svg width="5" height="5"><path d="M0 2.500h5M2.500 0v5" stroke="#6b5a3a" strokeWidth="1" /></svg>
            * 2024_Cornerfinish.Z3 - [Mold_CAM] <Cross />
          </DocTab>
          <IconButton aria-label="New tab"><svg width="5" height="5"><path d="M0 2.500h5M2.500 0v5" stroke="#999" strokeWidth=".9" /></svg></IconButton>
        </DocTabs>
      </DocBar>

      <WorkArea>
        <ManagerPane>
          <SideStrip>
            <svg width="13" height="13" viewBox="0 0 13 13"><path d="M1 1h4v4H1z" fill="#69a9d6" /><path d="M0 8l6-4 6 2v6H2z" fill="#7cc09d" /><path d="M5 3h3v4H5z" fill="#e0a352" /></svg>
          </SideStrip>
          <ManagerTree>
            <ManagerRow $indent={3}><Folder arrow={false} />Setup 1</ManagerRow>
            <ManagerRow $indent={2} $shade>
              <Chevron open />
              <svg width="8" height="8" viewBox="0 0 8 8"><path d="M0 2l4-2 4 2v4L4 8 0 6z" fill="#1f77b5" /></svg>
              Geometry :
            </ManagerRow>
            <Grow />
            <ManagerRow $indent={0} $shade />
          </ManagerTree>
        </ManagerPane>

        <Viewport>
          <Model />
          <ViewHints>
            <div>&lt;middle-click&gt; to continue.</div>
            <div>&lt;Shift-right-click&gt; to display pick filter.</div>
          </ViewHints>
          <ViewTools>
            <IconButton aria-label="Exit" $w={10}><ViewIcon name="exit" /></IconButton>
            <IconButton aria-label="Paint" $w={20}><ViewIcon name="brush" /><Caret /></IconButton>
            <IconButton aria-label="Filter" $w={9}><ViewIcon name="filter" /></IconButton>
            <FilterBox aria-label="Pick filter" />
            {["solid", "wire", "star", "zoom", "target", "ruler"].map((n) => (
              <IconButton key={n} aria-label={n} $w={18}><ViewIcon name={n} />&nbsp;<Caret /></IconButton>
            ))}
          </ViewTools>
          <ViewScale>241.938mm</ViewScale>
        </Viewport>

        <Dialog onSubmit={(e) => e.preventDefault()}>
          <DialogTitle>
            <Logo s={8} />
            Corner Finish 2
            <DialogControls>
              <svg width="7" height="6"><path d="M.5.5h6v3.500H3L2 5.500V4H.5z" fill="none" stroke="#999" strokeWidth=".7" /></svg>
              <BoxedCross />
            </DialogControls>
          </DialogTitle>
          <DialogBody>
            <PageTree>
              {nodes.map(([label, level, icon, open], i) => (
                <PageNode key={label} $level={level} $shade={i % 2 === 1}>
                  {level === 1 && <Expander><Chevron open={open} /></Expander>}
                  <NodeLabel $current={label === "Tolerance and Steps"}><NodeIcon name={icon} />{label}</NodeLabel>
                </PageNode>
              ))}
            </PageTree>
            <FormPane>
              <Section>
                <Head>Tolerance and Thick</Head>
                <Row>
                  <label htmlFor="path-tolerance">Path Tolerance</label>
                  <Values><Field id="path-tolerance" defaultValue="0.01" /></Values>
                </Row>
                <Row>
                  <label htmlFor="surface-thick">Surface Thick</label>
                  <Values $cols="33px 1fr"><Choice id="thick-mode" value="Total" /><Field id="surface-thick" defaultValue="0" /></Values>
                </Row>
              </Section>
              <Section>
                <Head>Flat Regions</Head>
                <Row>
                  <label htmlFor="flat-pattern">Flat Pattern</label>
                  <Values><Choice id="flat-pattern" value="Along" /></Values>
                </Row>
                <Row>
                  <label htmlFor="sequencing">Sequencing</label>
                  <Values><Choice id="sequencing" value="Outside-In Alternate" /></Values>
                </Row>
                <Row>
                  <label htmlFor="flat-step">Step Value</label>
                  <Values $cols="42px 1fr"><Choice id="flat-step-mode" value="Scallop" /><Field id="flat-step" defaultValue="0.0005" /></Values>
                </Row>
              </Section>
              <Section>
                <Head>Steep Regions</Head>
                <Row>
                  <label htmlFor="steep-pattern">Steep Pattern</label>
                  <Values><Choice id="steep-pattern" value="Across" /></Values>
                </Row>
                <Row>
                  <label htmlFor="steep-progress">Steep Cut Progress</label>
                  <Values><Choice id="steep-progress" value="High to Low" /></Values>
                </Row>
                <Row>
                  <label htmlFor="steep-step">Step Value</label>
                  <Values $cols="42px 1fr"><Choice id="steep-step-mode" value="Scallop" /><Field id="steep-step" ref={stepRef} defaultValue="0.01" /></Values>
                </Row>
              </Section>
            </FormPane>
          </DialogBody>
          <Footer>
            <PushButton type="button" $col={1}>Reset</PushButton>
            <PushButton type="button" $col={4} $wide>Batch Calculate</PushButton>
            <PushButton type="button">Calculate</PushButton>
            <PushButton type="button">OK</PushButton>
            <PushButton type="button">Cancel</PushButton>
            <PushButton type="button" aria-label="Hint"><FooterIcon name="bulb" /></PushButton>
            <PushButton type="button" aria-label="Edit"><FooterIcon name="edit" /></PushButton>
            <PushButton type="button" aria-label="Path" $off><FooterIcon name="pulse" /></PushButton>
            <PushButton type="button" aria-label="Solid" $off><FooterIcon name="block" /></PushButton>
            <PushButton type="button" aria-label="Tool"><FooterIcon name="tools" /></PushButton>
            <PushButton type="button" aria-label="Save"><Floppy s={12} /></PushButton>
            <PushButton type="button" aria-label="Load"><Folder s={13} /></PushButton>
          </Footer>
        </Dialog>
      </WorkArea>

      <StatusBar>
        &lt;middle-click&gt; to finish.
        <Grow />
        <StatusDivider />
        <svg width="11" height="11" viewBox="0 0 11 11"><path d="M.5.500h10v10H.5z" fill="#fff3cf" stroke="#e8b53a" /><path d="M2 2h7v7H2z" fill="#7e93a8" /><path d="M4 5h4M6 5v3" stroke="#fff" /></svg>
        <svg width="9" height="9" viewBox="0 0 9 9"><path d="M0 1h9v5H0z" fill="#2a8fc6" /><path d="M3 6h3v2H3z" fill="#35516b" /></svg>
        <svg width="9" height="9" viewBox="0 0 9 9"><path d="M.5.500h8v8h-8z" fill="#eaf2fa" stroke="#5b86b8" strokeWidth=".8" /><path d="M0 0h9v2H0z" fill="#5b86b8" /><path d="M1 4.500h7M1 6.500h7" stroke="#8fb0d4" strokeWidth=".7" /></svg>
        <StatusInput aria-label="Status message" />
      </StatusBar>
    </Window>
  );
}
